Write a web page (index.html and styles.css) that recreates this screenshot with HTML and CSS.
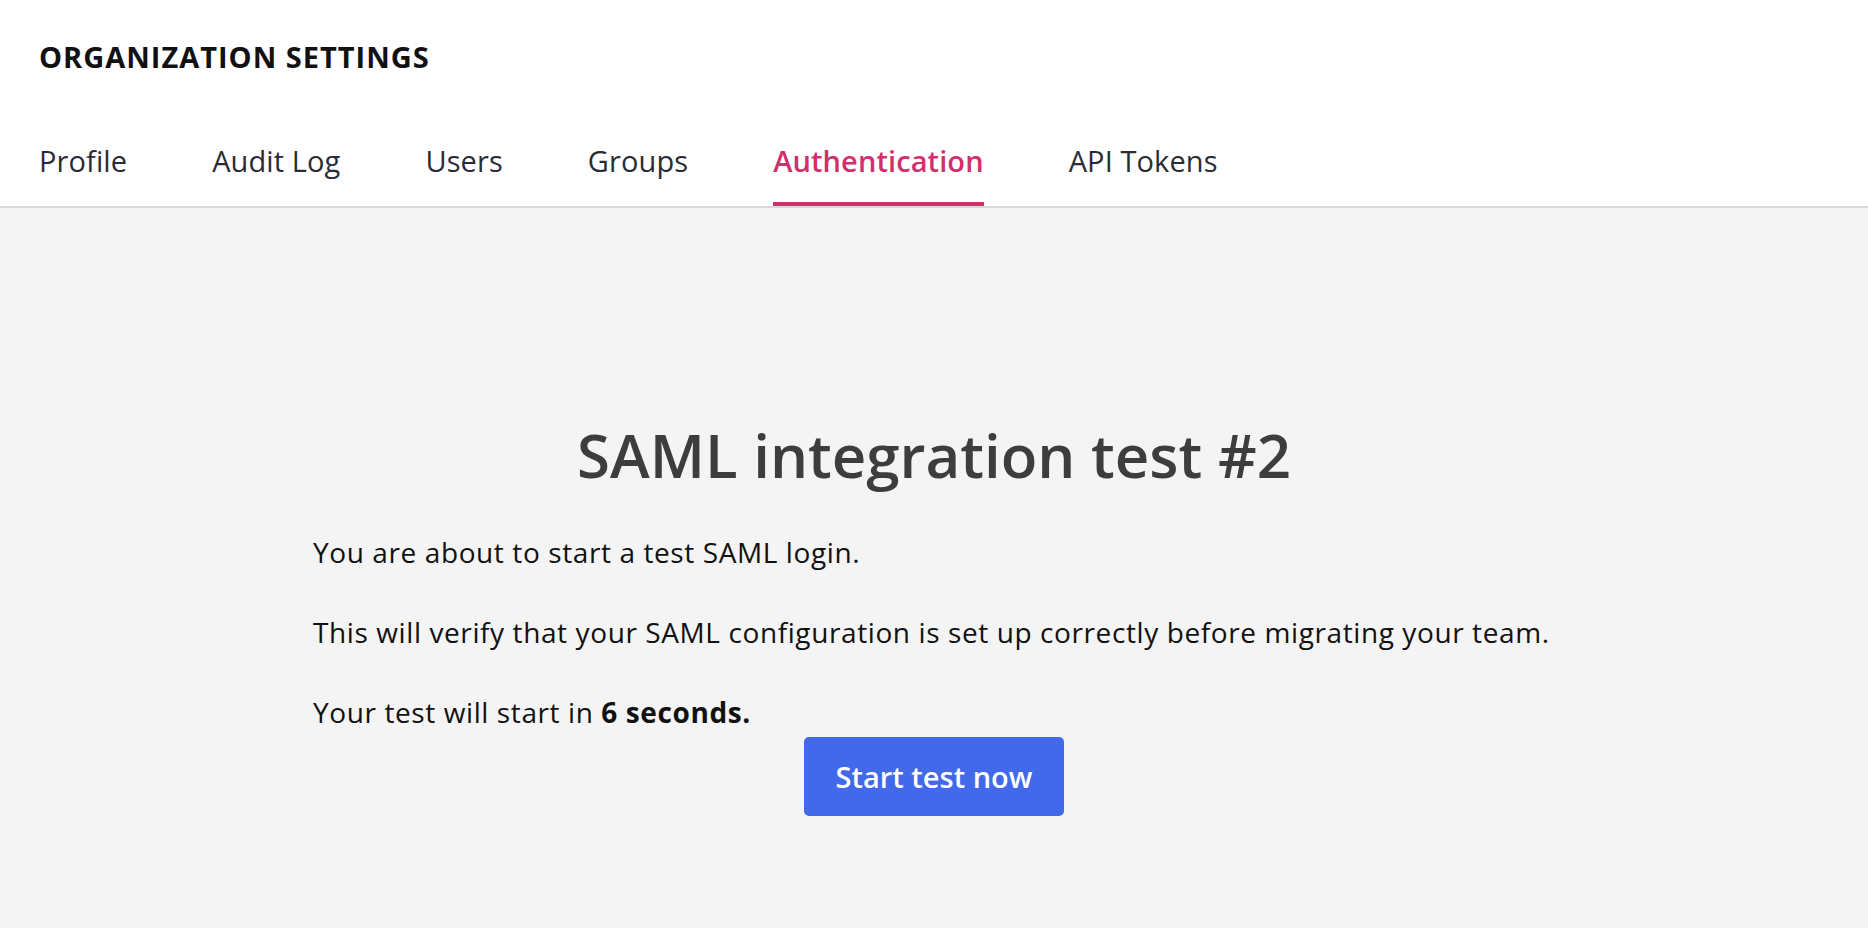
FILE: index.html
```html
<!DOCTYPE html>
<html lang="en">
<head>
<meta charset="utf-8">
<title>Organization Settings</title>
<link rel="stylesheet" href="styles.css">
</head>
<body>
<header class="header">
  <h1 class="title">ORGANIZATION SETTINGS</h1>
  <nav class="tabs">
    <a class="tab">Profile</a>
    <a class="tab">Audit Log</a>
    <a class="tab">Users</a>
    <a class="tab">Groups</a>
    <a class="tab tab-active">Authentication</a>
    <a class="tab">API Tokens</a>
  </nav>
</header>
<main class="main">
  <h2 class="heading">SAML integration test #2</h2>
  <div class="content">
    <p class="text">You are about to start a test SAML login.</p>
    <p class="text">This will verify that your SAML configuration is set up correctly before migrating your team.</p>
    <p class="text">Your test will start in <strong>6 seconds.</strong></p>
    <div class="actions">
      <button class="btn">Start test now</button>
    </div>
  </div>
</main>
</body>
</html>
```
FILE: styles.css
```css
* { box-sizing: border-box; }
html, body { margin: 0; padding: 0; }
body {
  font-family: "Open Sans", Lato, sans-serif;
  background: #f4f4f4;
  min-height: 928px;
}
.header {
  background: #ffffff;
  padding: 39px 39px 0;
  border-bottom: 2px solid #d9d9dd;
}
.title {
  margin: 0;
  font-size: 29px;
  line-height: 36px;
  font-weight: 700;
  letter-spacing: 1px;
  color: #111111;
}
.tabs {
  display: flex;
  gap: 85px;
  margin-top: 68px;
}
.tab {
  font-size: 29px;
  line-height: 36px;
  letter-spacing: 0.1px;
  color: #2b2b35;
  padding-bottom: 23px;
  border-bottom: 4px solid transparent;
  cursor: pointer;
}
.tab-active {
  color: #d1306e;
  font-weight: 600;
  border-bottom-color: #d1306e;
}
.main {
  padding-top: 211px;
}
.heading {
  margin: 0;
  text-align: center;
  font-size: 60px;
  line-height: 72px;
  font-weight: 600;
  color: #3d3d3d;
}
.content {
  width: 1242px;
  margin: 44px auto 0;
}
.text {
  margin: 0 0 46px;
  font-size: 28px;
  line-height: 34px;
  letter-spacing: 0.6px;
  color: #111111;
}
.text:last-of-type { margin-bottom: 8px; }
.text strong { font-weight: 700; }
.actions {
  display: flex;
  justify-content: center;
}
.btn {
  width: 260px;
  height: 79px;
  border: none;
  border-radius: 5px;
  background: #4169ea;
  color: #ffffff;
  font-family: inherit;
  font-size: 29px;
  font-weight: 600;
  cursor: pointer;
}
```
